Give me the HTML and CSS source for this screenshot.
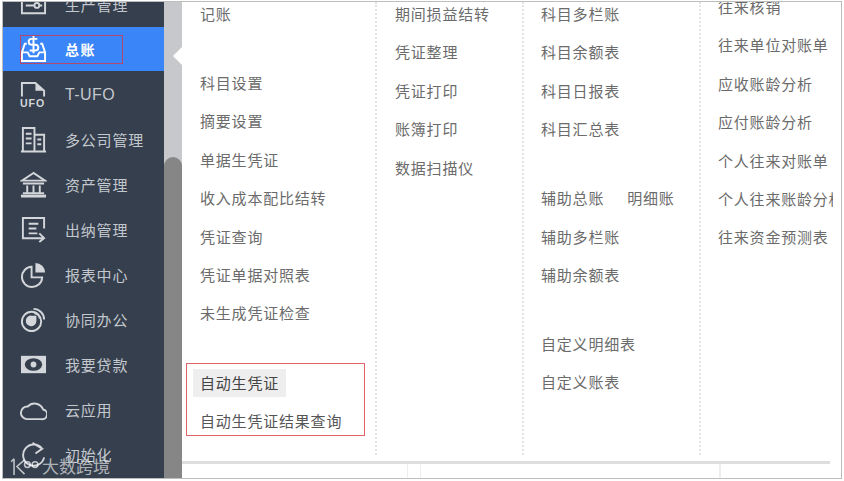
FILE: index.html
```html
<!DOCTYPE html>
<html lang="zh-CN">
<head>
    <meta charset="UTF-8" />
    <title>总账</title>
    <link rel="stylesheet" href="styles.css">
</head>
<body>
    <div class="frame">
        <div class="sidebar">
            <div class="nav-item first">
                <svg class="icon" viewBox="0 0 28 28"><path d="M2 1h24v22H2z M6 15h9 M20 15h3" /><circle cx="17.500" cy="15" r="2.500" /></svg>
                <span>生产管理</span>
            </div>
            <div class="nav-item active">
                <svg class="icon" viewBox="0 0 28 28"><path d="M18 3h-6a3 3 0 0 0 0 6h4a3 3 0 0 1 0 6h-6 M14 0v18 M7 8H5L2 17v9h24v-9l-3-9h-2 M2 17h6l2 4h8l2-4h6" /></svg>
                <span>总账</span>
                <div class="mark"></div>
            </div>
            <div class="nav-item">
                <svg class="icon" viewBox="0 0 28 28"><path d="M2 16V2h14l9 8v6" /><path class="solid" d="M16 2l9 8h-9z" /><text x="0" y="27" class="ufo">UFO</text></svg>
                <span class="latin">T-UFO</span>
            </div>
            <div class="nav-item">
                <svg class="icon" viewBox="0 0 28 28"><path d="M1 26.500h26 M3 26V2h12v24 M15 9h10v17 M6 8h6 M6 13h6 M6 18h6 M18 14h4 M18 19h4" /></svg>
                <span>多公司管理</span>
            </div>
            <div class="nav-item">
                <svg class="icon" viewBox="0 0 28 28"><path d="M14 2L2 10h24z M3 13h22 M7.500 15v7 M14 15v7 M20.500 15v7 M3 23h22" /><path class="thick" d="M1 26h26" /></svg>
                <span>资产管理</span>
            </div>
            <div class="nav-item">
                <svg class="icon" viewBox="0 0 28 28"><path d="M25 13V2H3v21h11 M9 8h10 M9 13h8 M9 18h9 M14 23h11 M20 18l5 5-5 4" /></svg>
                <span>出纳管理</span>
            </div>
            <div class="nav-item">
                <svg class="icon" viewBox="0 0 28 28"><path d="M12 6a10.500 10.500 0 1 0 11 11H12z" /><path class="solid" d="M16 2a10 10 0 0 1 10 10H16z" /></svg>
                <span>报表中心</span>
            </div>
            <div class="nav-item">
                <svg class="icon" viewBox="0 0 28 28"><circle cx="12" cy="16" r="10" /><path class="solid" d="M12 10h5v6a5.500 5.500 0 1 1-5-6z" /><path d="M14 3a11 11 0 0 1 11 11 M15 7.500a6 6 0 0 1 5.500 5.500" /></svg>
                <span>协同办公</span>
            </div>
            <div class="nav-item">
                <svg class="icon" viewBox="0 0 28 28"><rect class="solid" x="1" y="5" width="26" height="18" /><ellipse class="hole" cx="14" cy="14" rx="9" ry="6.500" /><circle class="solid" cx="14" cy="14" r="3" /></svg>
                <span>我要贷款</span>
            </div>
            <div class="nav-item">
                <svg class="icon" viewBox="0 0 28 28"><path d="M7 24h15a5 5 0 0 0 2-10A9.500 9.500 0 0 0 8 11a6.500 6.500 0 0 0-1 13z" /></svg>
                <span>云应用</span>
            </div>
            <div class="nav-item">
                <svg class="icon" viewBox="0 0 28 28"><path d="M23 8A11 11 0 1 0 25 17 M13 2l10 6-7 5" /></svg>
                <span>初始化</span>
            </div>
        </div>
        <div class="scroller">
            <div class="thumb"></div>
            <div class="notch"></div>
        </div>
        <div class="content">
            <div class="menu">
                <div class="col col-1">
                    <div class="row">记账</div>
                    <div class="row spaced">科目设置</div>
                    <div class="row">摘要设置</div>
                    <div class="row">单据生凭证</div>
                    <div class="row">收入成本配比结转</div>
                    <div class="row">凭证查询</div>
                    <div class="row">凭证单据对照表</div>
                    <div class="row">未生成凭证检查</div>
                    <div class="group">
                        <div class="group-row"><span class="hover">自动生凭证</span></div>
                        <div class="group-row">自动生凭证结果查询</div>
                    </div>
                </div>
                <div class="col col-2">
                    <div class="row">期间损益结转</div>
                    <div class="row">凭证整理</div>
                    <div class="row">凭证打印</div>
                    <div class="row">账簿打印</div>
                    <div class="row">数据扫描仪</div>
                </div>
                <div class="col col-3">
                    <div class="row">科目多栏账</div>
                    <div class="row">科目余额表</div>
                    <div class="row">科目日报表</div>
                    <div class="row">科目汇总表</div>
                    <div class="row spaced pair"><span>辅助总账</span><span>明细账</span></div>
                    <div class="row">辅助多栏账</div>
                    <div class="row">辅助余额表</div>
                    <div class="row spaced">自定义明细表</div>
                    <div class="row">自定义账表</div>
                </div>
                <div class="col col-4">
                    <div class="row">往来核销</div>
                    <div class="row">往来单位对账单</div>
                    <div class="row">应收账龄分析</div>
                    <div class="row">应付账龄分析</div>
                    <div class="row">个人往来对账单</div>
                    <div class="row">个人往来账龄分析</div>
                    <div class="row">往来资金预测表</div>
                </div>
            </div>
            <div class="foot">
                <div class="foot-cell wide"></div>
                <div class="foot-cell narrow"></div>
                <div class="foot-cell mid"></div>
                <div class="foot-cell"></div>
            </div>
        </div>
        <div class="watermark">
            <svg class="wm-logo" viewBox="0 0 34 22"><path d="M5 3v17 M2 6l3-3 M16 4l-8 7 8 8" /><circle cx="19" cy="9" r="3" /><circle cx="27" cy="9" r="3" /></svg>
            <span>大数跨境</span>
        </div>
    </div>
</body>
</html>
```

FILE: styles.css
```css
html, body {
    margin: 0;
    padding: 0;
    height: 100%;
    background: #fff;
    overflow: hidden;
}
body {
    font-family: "Noto Sans CJK SC", "Liberation Sans", sans-serif;
    padding: 1px 2px 0 2px;
    box-sizing: border-box;
}
.frame {
    position: relative;
    display: flex;
    width: 840px;
    height: 478px;
    box-sizing: border-box;
    border: 1px solid #bdbdbd;
    overflow: hidden;
}

/* left nav */
.sidebar {
    width: 161px;
    flex: none;
    background: #363f4d;
}
.nav-item {
    position: relative;
    display: flex;
    align-items: center;
    height: 45px;
    padding-left: 17px;
    color: #c3c8ce;
    font-size: 15px;
    letter-spacing: 0.8px;
}
.nav-item.first {
    margin-top: -20px;
}
.nav-item.active {
    height: 44px;
    margin-bottom: 1px;
    background: #3a86f8;
    color: #fff;
    font-weight: bold;
    font-size: 14px;
    letter-spacing: 1.5px;
}
.nav-item .latin {
    font-family: "Liberation Sans", sans-serif;
    font-size: 16px;
    letter-spacing: 0.4px;
}
.icon {
    width: 27px;
    height: 27px;
    margin-right: 18px;
    flex: none;
    fill: none;
    stroke: #d3d6da;
    stroke-width: 2;
}
.active .icon {
    stroke: #fff;
}
.icon .solid {
    fill: #d3d6da;
    stroke: none;
}
.icon .thick {
    stroke-width: 3;
}
.icon .hole {
    fill: #363f4d;
    stroke: none;
}
.icon .ufo {
    font-family: "Liberation Sans", sans-serif;
    font-weight: bold;
    font-size: 11px;
    letter-spacing: 1px;
    fill: #d3d6da;
    stroke: none;
}
.mark {
    position: absolute;
    left: 17px;
    top: 8px;
    width: 103px;
    height: 29px;
    box-sizing: border-box;
    border: 1px solid #b5476f;
}

/* scrollbar beside nav */
.scroller {
    position: relative;
    width: 18px;
    flex: none;
    background: #c6c8cc;
}
.thumb {
    position: absolute;
    left: 0;
    right: 0;
    top: 155px;
    bottom: 0;
    background: #868686;
    border-radius: 9px 9px 0 0;
}
.notch {
    position: absolute;
    right: 0;
    top: 45px;
    width: 0;
    height: 0;
    border-top: 9px solid transparent;
    border-bottom: 9px solid transparent;
    border-right: 9px solid #fff;
}

/* menu columns */
.content {
    flex: 1;
    display: flex;
    flex-direction: column;
    min-width: 0;
}
.menu {
    display: flex;
    height: 455px;
    overflow: hidden;
    color: #6b6b6b;
    font-size: 15px;
    letter-spacing: 0.8px;
}
.col {
    box-sizing: border-box;
    white-space: nowrap;
    overflow: hidden;
}
.col-1 {
    width: 195px;
    padding-left: 18px;
    border-right: 2px dotted #e3e3e3;
}
.col-2 {
    width: 147px;
    padding-left: 18px;
    border-right: 2px dotted #e3e3e3;
}
.col-3 {
    width: 177px;
    padding-left: 17px;
    border-right: 2px dotted #e3e3e3;
}
.col-4 {
    width: 132px;
    padding-left: 17px;
}
.row {
    height: 38.4px;
    line-height: 38.4px;
}
.row:first-child {
    margin-top: -7px;
}
.col-4 .row:first-child {
    margin-top: -14px;
}
.row.spaced {
    margin-top: 30.6px;
}
.pair {
    display: flex;
    gap: 23px;
}
.group {
    width: 179px;
    box-sizing: border-box;
    margin: 30px 0 0 -14px;
    padding: 5px 0 0 6px;
    height: 73px;
    border: 1px solid #e0656a;
    color: #555;
}
.group-row {
    height: 28px;
    line-height: 28px;
    margin-bottom: 10px;
    padding-left: 7px;
}
.hover {
    display: inline-block;
    margin-left: -7px;
    padding: 0 7px;
    background: #eee;
    color: #444;
}

/* table stub at the bottom */
.foot {
    display: flex;
    width: 648px;
    height: 17px;
    margin-top: 6px;
    border-top: 3px solid #dedede;
    box-sizing: border-box;
}
.foot-cell {
    border-right: 1px solid #eee;
}
.foot-cell.wide {
    width: 225px;
}
.foot-cell.narrow {
    width: 12px;
}
.foot-cell.mid {
    width: 298px;
}

/* watermark over the nav */
.watermark {
    position: absolute;
    left: 6px;
    bottom: 0;
    display: flex;
    align-items: center;
    color: rgba(255, 255, 255, 0.62);
    font-size: 17px;
    line-height: 24px;
}
.wm-logo {
    width: 33px;
    height: 21px;
    fill: none;
    stroke: rgba(255, 255, 255, 0.7);
    stroke-width: 1.6;
}
```
